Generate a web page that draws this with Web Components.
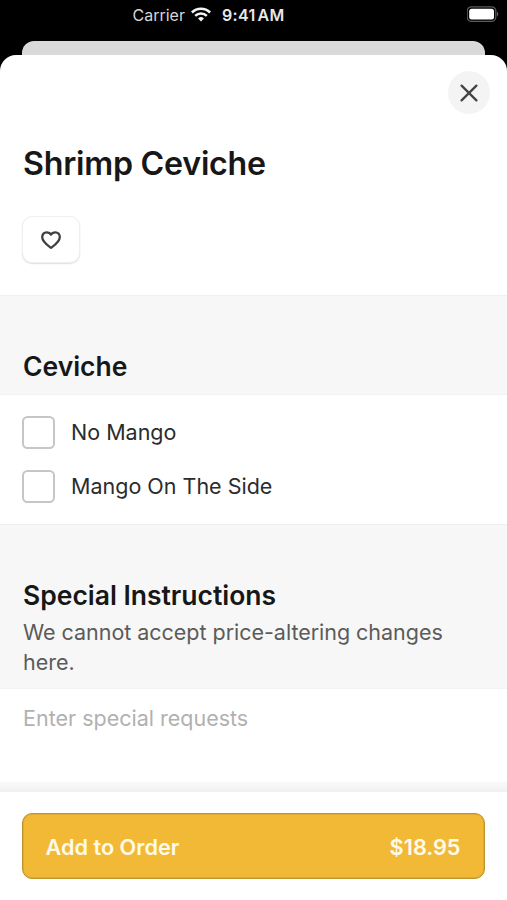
<!DOCTYPE html>
<html lang="en">
<head>
<meta charset="utf-8">
<title>Shrimp Ceviche</title>
<style>
html,body{margin:0;height:100%;background:#000;overflow:hidden}
body{font-family:Inter,"Liberation Sans",sans-serif;color:#171717}
</style>
</head>
<body>
<order-screen></order-screen>
<script>
const define = (name, html) => customElements.define(name, class extends HTMLElement {
  constructor() {
    super();
    const t = document.createElement('template');
    t.innerHTML = html;
    this.attachShadow({mode: 'open'}).append(t.content.cloneNode(true));
  }
});

define('status-bar', `
<style>
:host{display:grid;grid-template-columns:1fr auto;height:41px;color:#e8e8e8;font-size:16px;line-height:30px}
.mid{display:flex;padding-left:132.5px;height:30px;align-items:center}
.carrier{width:58px;color:#d6d6d6}
.time{font-weight:600;margin-left:11.5px;letter-spacing:.35px;word-spacing:-2.5px;font-size:16px}
.wifi{width:20px;height:15px;margin-top:-1px}
.bat{width:32px;height:16px;margin:6px 8px 0 0}
</style>
<div class="mid"><span class="carrier">Carrier</span>
<svg class="wifi" viewBox="0 0 20 15" fill="none" stroke="#f4f4f4" stroke-width="2.6"><path d="M.9 5.5a13 13 0 0 1 18.2 0"/><path d="M4.2 8.9a8.3 8.3 0 0 1 11.6 0"/><path d="M10 14.6 7.1 11.5a4.2 4.2 0 0 1 5.8 0Z" fill="#f4f4f4" stroke="none"/></svg>
<span class="time">9:41 AM</span></div>
<svg class="bat" viewBox="0 0 32 16"><rect x="0.2" y=".8" width="28.6" height="14.6" rx="4.3" fill="none" stroke="#5a5a5a" stroke-width="1.3"/><rect x="2.2" y="2.8" width="24.8" height="10.6" rx="2.5" fill="#fff"/><path d="M30 5.8q2.6 2.2 0 4.6Z" fill="#666"/></svg>`);

define('icon-close', `
<style>:host{display:grid;place-items:center;width:42px;height:43px;border-radius:50%;background:#f4f4f4}svg{width:18px;height:18px}</style>
<svg viewBox="0 0 18 18" stroke="#444" stroke-width="2.3" stroke-linecap="round"><path d="M1.6 1.6 16.4 16.4M16.4 1.6 1.6 16.4"/></svg>`);

define('favorite-button', `
<style>:host{display:grid;place-items:center;box-sizing:border-box;width:58px;height:47px;margin-left:-1px;border-radius:10px;border:1px solid #efefef;background:#fff;box-shadow:0 1px 1.5px #dedede}svg{width:22px;height:20px;margin:0 0 0 -1px}</style>
<svg viewBox="0 0 22 20" fill="none" stroke="#404040" stroke-width="2.3" stroke-linejoin="round"><path d="M11 17.9C7.8 15.6 2.2 12 2.2 7.1C2.2 4.2 4.1 2.3 6.6 2.3C8.5 2.3 10.2 3.2 11 4.6C11.8 3.2 13.5 2.3 15.4 2.3C17.9 2.3 19.8 4.2 19.8 7.1C19.8 12 14.2 15.6 11 17.9Z"/></svg>`);

define('dish-header', `
<style>
:host{display:flex;flex-direction:column;height:240px;box-sizing:border-box;padding:16px 17px 0 23px}
icon-close{align-self:flex-end}
h1{margin:29px 0 31px;font-size:32.2px;line-height:42px;font-weight:600;letter-spacing:-.25px;white-space:nowrap}
</style>
<icon-close></icon-close><h1><slot></slot></h1><favorite-button></favorite-button>`);

define('section-heading', `
<style>
:host{display:block;box-sizing:border-box;background:#f7f7f7;border-top:1px solid #efefef;border-bottom:1px solid #f3f3f3;padding:53px 23px 0}
h2{margin:0;font-size:26.5px;line-height:34px;font-weight:600;letter-spacing:-.02px}
::slotted(p){margin:5px 0 0;font-size:21.5px;line-height:30px;letter-spacing:-.03px;color:#5b5b5b}
</style>
<h2><slot name="title"></slot></h2><slot></slot>`);

define('check-option', `
<style>
:host{display:flex;align-items:center;gap:16px;height:54px;font-size:21.5px;color:#2c2c2c}
i{box-sizing:border-box;width:33px;height:33px;border:2px solid #c6c6c6;border-radius:5.5px;background:#fff}
</style>
<i></i><span><slot></slot></span>`);

define('order-button', `
<style>
:host{display:flex;justify-content:space-between;align-items:center;box-sizing:border-box;height:66px;padding:1px 23.5px 0 22.5px;border:1px solid #bd942b;box-shadow:inset 0 0 0 1px #e0ab33;border-radius:10px;background:#f2b936;color:#fffbe8;font-size:21.7px;font-weight:600}
</style>
<span><slot name="label"></slot></span><span><slot name="price"></slot></span>`);

define('order-screen', `
<style>
:host{display:flex;flex-direction:column;height:900px;width:507px}
.behind{height:14px;margin:0 22px;border-radius:12px 12px 0 0;background:#d9d9d9}
.sheet{flex:1;background:#fff;border-radius:16px 16px 0 0;display:flex;flex-direction:column}
.one{height:100px}.two{height:165px}
.options{height:129px;padding:10px 22px 0;box-sizing:border-box}
.request{height:93px;box-sizing:border-box;padding:14px 23px;font-size:21.5px;line-height:30px;color:#b1b1b1}
.line{height:10px;background:linear-gradient(#f7f7f7 40%,#f0f0f0)}
footer{padding:21px 22px}
</style>
<status-bar></status-bar><div class="behind"></div>
<div class="sheet">
<dish-header>Shrimp Ceviche</dish-header>
<section-heading class="one"><span slot="title">Ceviche</span></section-heading>
<div class="options"><check-option>No Mango</check-option><check-option>Mango On The Side</check-option></div>
<section-heading class="two"><span slot="title">Special Instructions</span><p>We cannot accept price-altering changes here.</p></section-heading>
<div class="request">Enter special requests</div>
<div class="line"></div>
<footer><order-button><span slot="label">Add to Order</span><span slot="price">$18.95</span></order-button></footer>
</div>`);
</script>
</body>
</html>
